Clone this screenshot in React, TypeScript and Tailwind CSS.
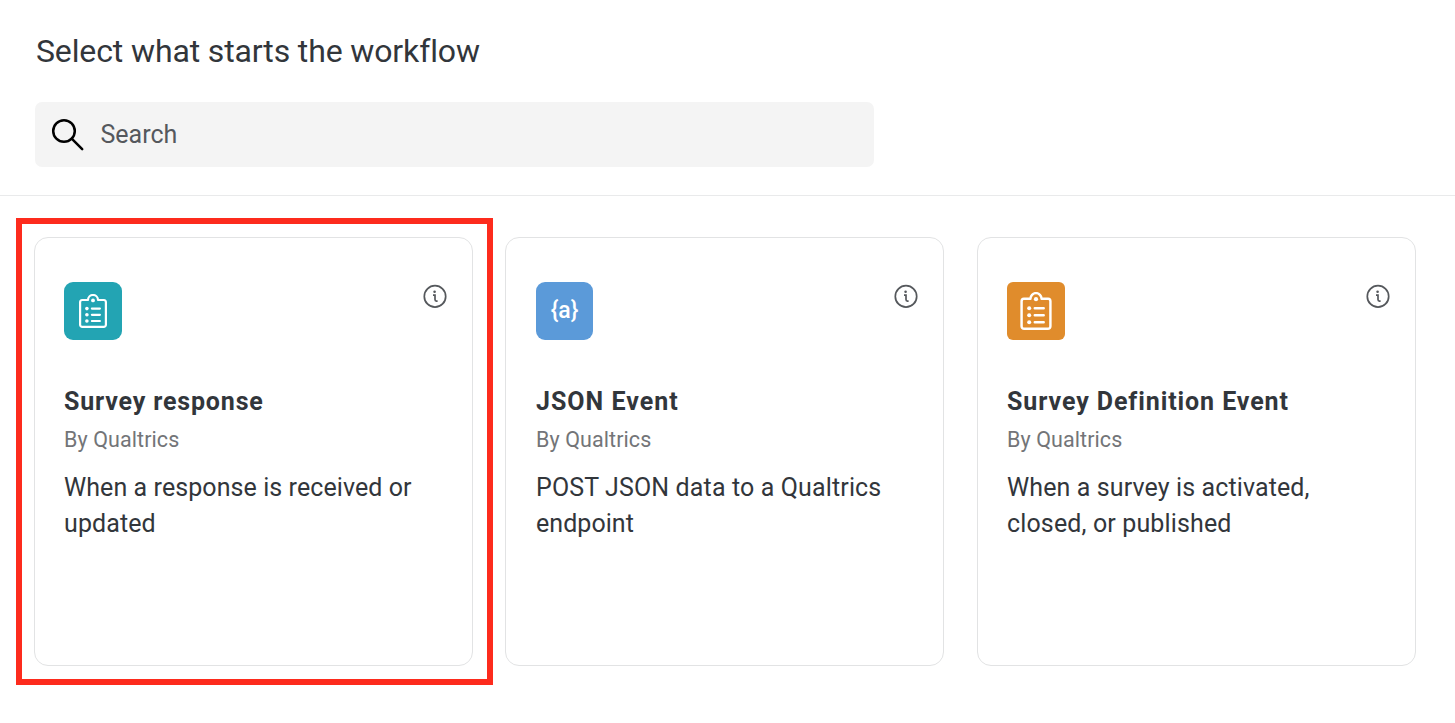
import type { ReactNode } from "react";

function ClipboardIcon({ className }: { className: string }) {
  return (
    <svg viewBox="0 0 28 34" fill="none" stroke="white" strokeWidth="2.2" strokeLinecap="round" strokeLinejoin="round" className={className}>
      <path d="M9 6H3.2A2.2 2.2 0 0 0 1.1 8.2v22.5a2.2 2.2 0 0 0 2.2 2.2h21.4a2.2 2.2 0 0 0 2.2-2.2V8.2A2.2 2.2 0 0 0 24.8 6H19a5 5 0 0 0-10 0Z" />
      <circle cx="14" cy="6.4" r="1.9" fill="white" stroke="none" />
      <path d="M12.9 14.6h8M12.9 20.8h8M12.9 27h8" />
      <g fill="white" stroke="none">
        <circle cx="7.9" cy="14.6" r="1.8" />
        <circle cx="7.9" cy="20.8" r="1.8" />
        <circle cx="7.9" cy="27" r="1.8" />
      </g>
    </svg>
  );
}

function InfoIcon() {
  return (
    <svg viewBox="0 0 24 24" fill="none" stroke="#55585c" strokeWidth="1.7" className="size-6">
      <circle cx="12" cy="12.4" r="10.7" />
      <circle cx="11.6" cy="7.7" r="1.3" fill="#55585c" stroke="none" />
      <path d="M10 11.2h2v4.4q0 1.6 1.4 1.6h1.2" />
    </svg>
  );
}

type CardProps = {
  icon: ReactNode;
  inset: string;
  tile: string;
  title: string;
  titleClass: string;
  lines: { text: string; className: string }[];
};

function EventCard({ icon, inset, tile, title, titleClass, lines }: CardProps) {
  return (
    <article className={`h-[429px] w-[439px] shrink-0 rounded-[14px] border border-[#e2e3e4] pt-[44px] pr-[25px] ${inset}`}>
      <div className="flex items-start justify-between">
        <div className={`flex h-[58px] items-center justify-center ${tile}`}>{icon}</div>
        <div className="pt-[2px]">
          <InfoIcon />
        </div>
      </div>
      <h2 className={`mt-[44px] text-[25px] leading-[36px] font-bold whitespace-nowrap ${titleClass}`}>{title}</h2>
      <p className="mt-1 text-[21.5px] leading-[32px] tracking-[0.08px] text-[#737578]">By Qualtrics</p>
      <p className="mt-[14px] text-[25px] leading-[36px]">
        {lines.map((line) => (
          <span key={line.text} className={`block whitespace-nowrap ${line.className}`}>
            {line.text}
          </span>
        ))}
      </p>
    </article>
  );
}

export default function App() {
  return (
    <main className="relative h-[723px] w-[1455px] overflow-hidden bg-white font-['Roboto',sans-serif] text-[#32363b]">
      <header className="h-[196px] border-b border-[#e9eaeb] pt-[31px] pl-[35px]">
        <h1 className="pl-px text-[32px] leading-[40px] font-normal tracking-[-0.13px]">Select what starts the workflow</h1>
        <div className="mt-[31px] flex h-[65px] w-[839px] items-center rounded-[7px] bg-[#f4f4f4] pl-[16px]">
          <svg viewBox="0 0 34 34" fill="none" stroke="black" strokeWidth="2.5" strokeLinecap="round" className="size-[34px]">
            <circle cx="13" cy="13" r="10.8" />
            <path d="m20.7 20.7 10.5 10.5" />
          </svg>
          <span className="ml-[15.5px] text-[25px] leading-[36px] text-[#55585d]">Search</span>
        </div>
      </header>
      <section className="flex pt-[41px] pl-[34px]">
        <EventCard
          icon={<ClipboardIcon className="h-[34px] w-7" />}
          inset="mr-8 pl-[29px]"
          tile="w-[58px] rounded-[9px] bg-[#23a4b3]"
          title="Survey response"
          titleClass="tracking-[0.83px]"
          lines={[
            { text: "When a response is received or", className: "tracking-[0.08px]" },
            { text: "updated", className: "tracking-[0.1px]" },
          ]}
        />
        <EventCard
          icon={<span className="pb-[2px] text-[23px] leading-none font-medium text-white">{"{a}"}</span>}
          inset="mr-[33px] pl-[30px]"
          tile="w-[57px] rounded-[9px] bg-[#5b9ad9]"
          title="JSON Event"
          titleClass="tracking-[1px]"
          lines={[
            { text: "POST JSON data to a Qualtrics", className: "tracking-[0.13px]" },
            { text: "endpoint", className: "tracking-[0.05px]" },
          ]}
        />
        <EventCard
          icon={<ClipboardIcon className="h-[38px] w-8" />}
          inset="pl-[29px]"
          tile="w-[58px] rounded-[6px] bg-[#e08c2c]"
          title="Survey Definition Event"
          titleClass="tracking-[0.91px]"
          lines={[
            { text: "When a survey is activated,", className: "tracking-[0.11px]" },
            { text: "closed, or published", className: "tracking-[0.14px]" },
          ]}
        />
      </section>
      <div className="pointer-events-none absolute top-[218px] left-[16px] h-[467px] w-[477px] border-6 border-[#fd2b1d]" />
    </main>
  );
}
